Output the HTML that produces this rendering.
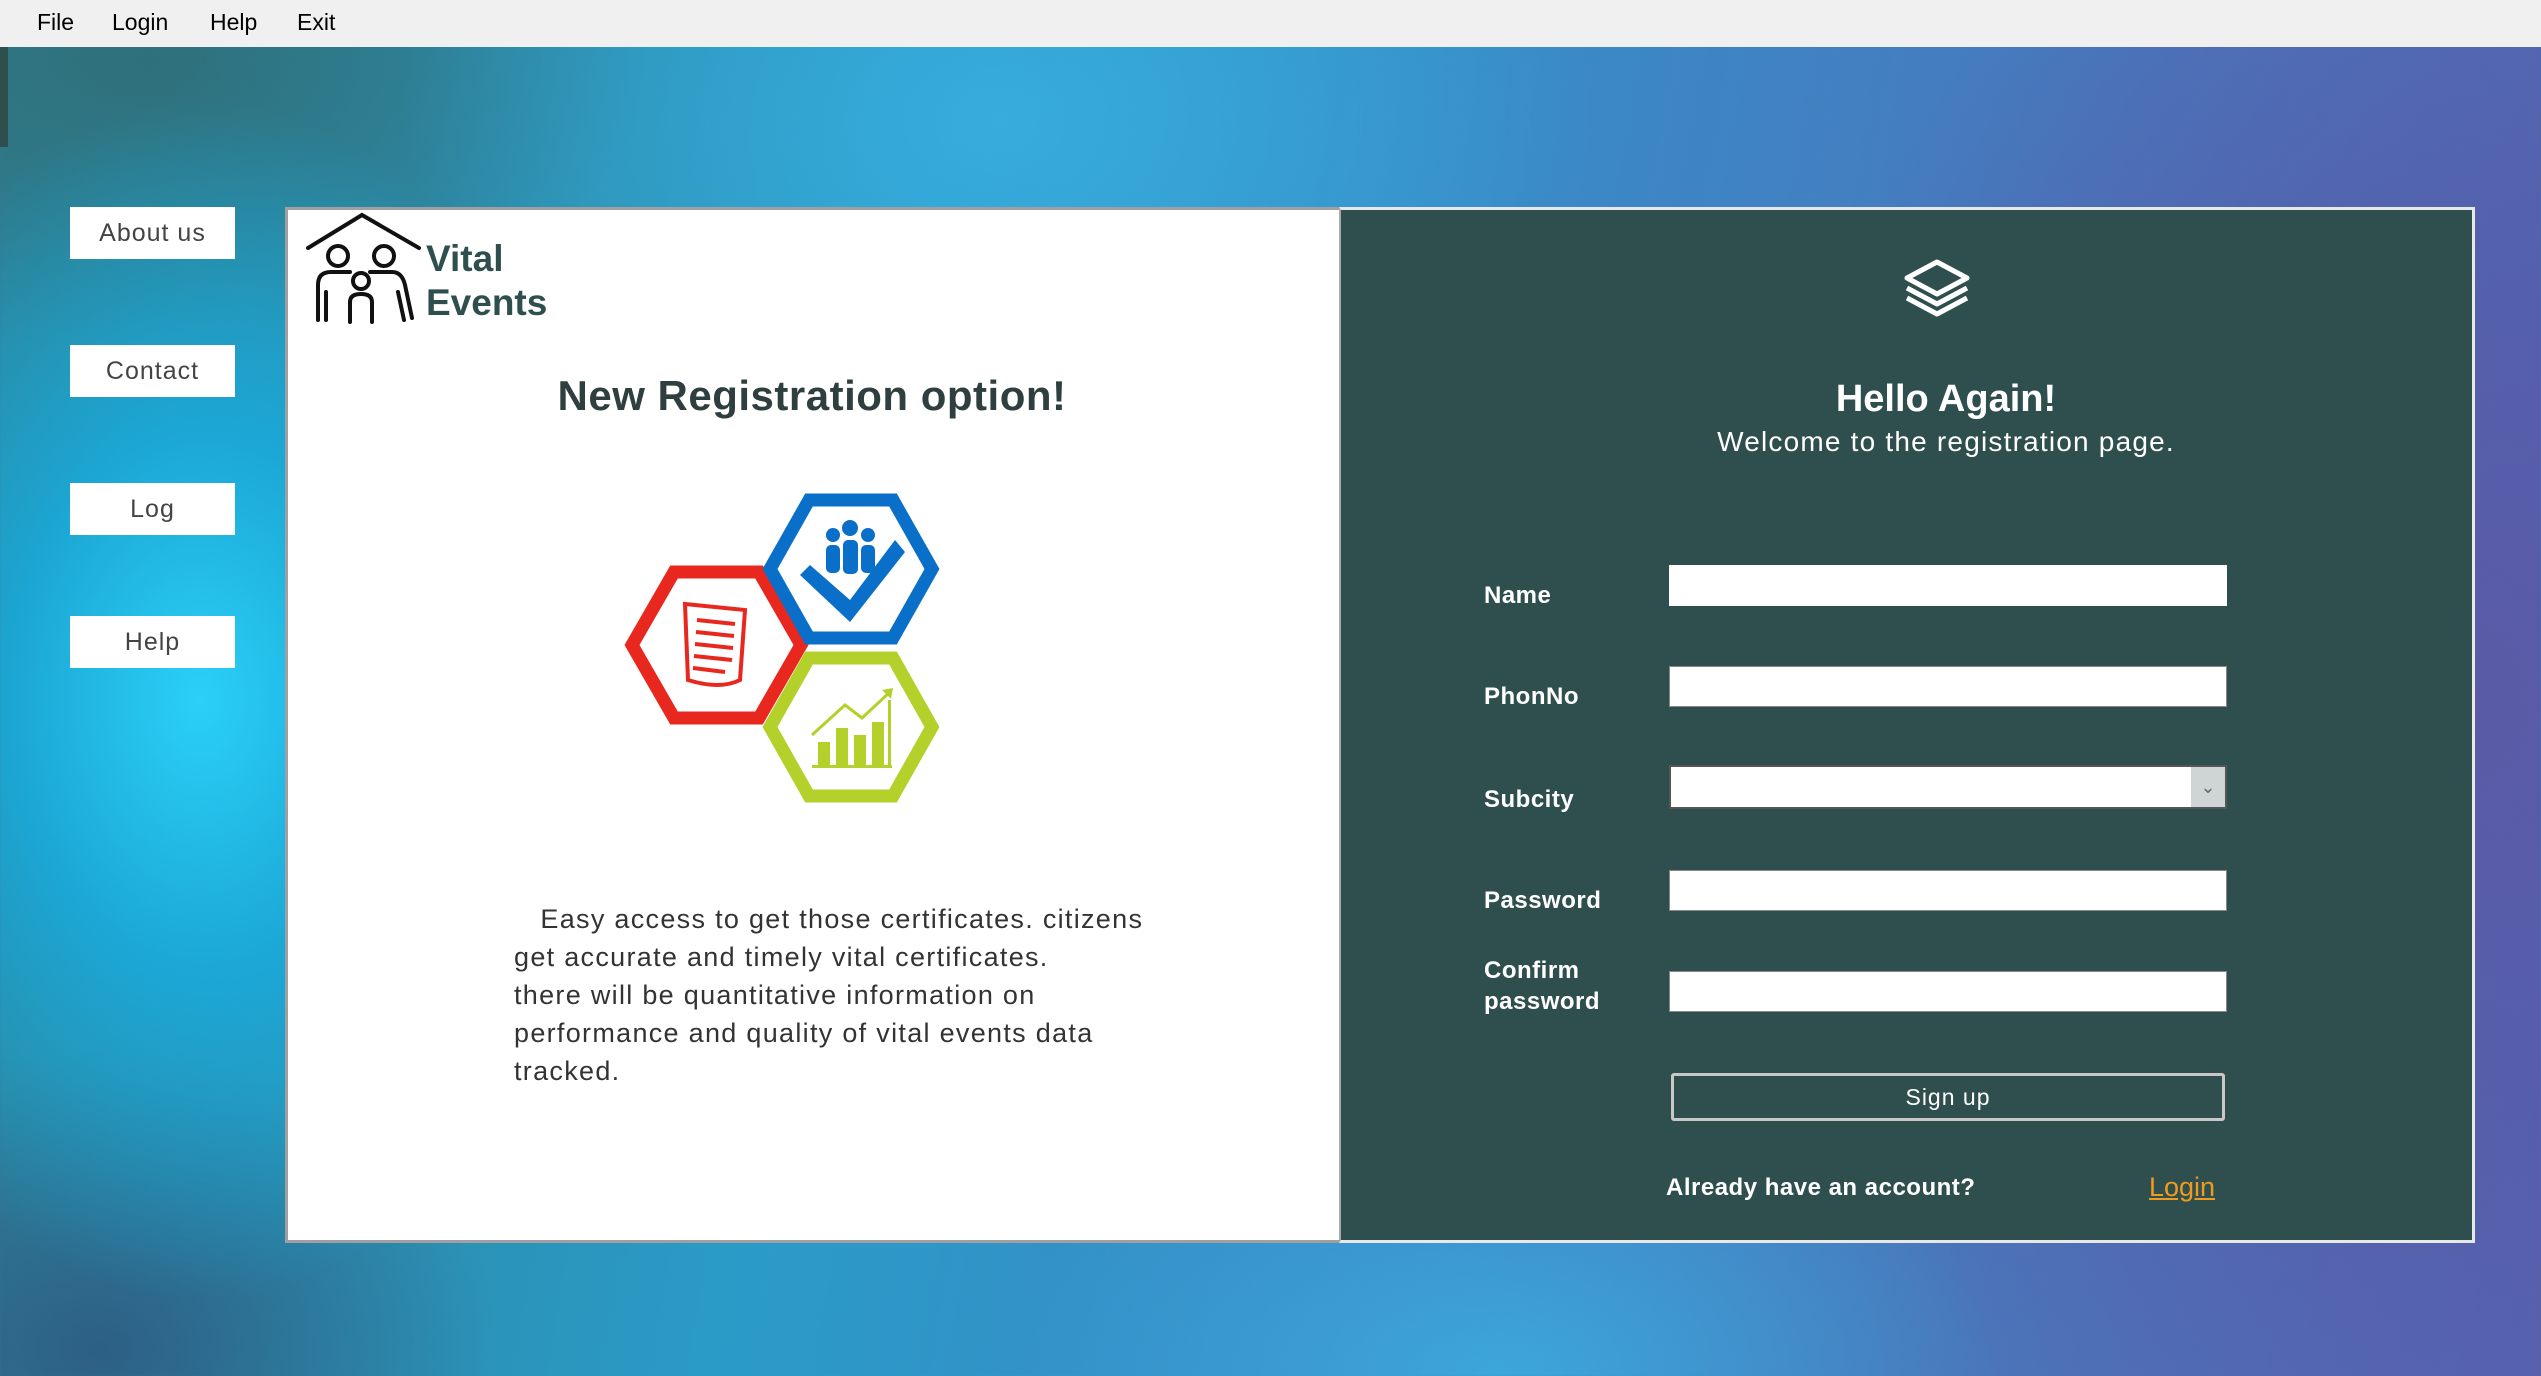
<!DOCTYPE html>
<html><head><meta charset="utf-8"><style>
*{margin:0;padding:0;box-sizing:border-box}
body{width:2541px;height:1376px;overflow:hidden;position:relative;font-family:"Liberation Sans",sans-serif;
background:
radial-gradient(ellipse 420px 600px at 200px 700px,#2ad0f8 0%,rgba(20,180,235,.7) 45%,rgba(20,160,220,0) 100%),
radial-gradient(ellipse 600px 400px at 1000px 120px,rgba(60,180,230,.7),rgba(60,170,220,0) 100%),
radial-gradient(ellipse 700px 900px at 2450px 700px,#5a5aa6 0%,rgba(85,90,170,.6) 50%,rgba(85,90,170,0) 100%),
radial-gradient(ellipse 500px 300px at 1500px 1376px,rgba(60,170,220,.9),rgba(60,170,220,0)),
radial-gradient(ellipse 400px 300px at 100px 1350px,rgba(45,85,125,.8),rgba(40,80,120,0)),
radial-gradient(ellipse 500px 300px at 150px 60px,rgba(47,110,120,.9),rgba(47,110,120,0)),
linear-gradient(100deg,#2f7f90 0%,#2a9bc8 35%,#3d86c6 60%,#5864ae 100%);}
.menu{position:absolute;left:0;top:0;width:2541px;height:47px;background:#f0f0f0;font-size:23px;color:#000}
.menu span{position:absolute;top:9px}
.side{position:absolute;left:70px;width:165px;height:52px;background:#fff;color:#444;font-size:25px;text-align:center;line-height:52px;letter-spacing:1px}
.lp{position:absolute;left:285px;top:207px;width:1054px;height:1036px;background:#fff;border:3px solid #a0a0a0;border-right:none}
.rp{position:absolute;left:1339px;top:207px;width:1136px;height:1036px;background:#2f4f4f;border:3px solid #e8e8e8;border-left:2px solid #aaa}
.t{position:absolute;white-space:nowrap}
.lab{position:absolute;left:1484px;color:#fff;font-weight:bold;font-size:24px;letter-spacing:.5px}
.inp{position:absolute;left:1669px;width:558px;height:41px;background:#fff;border:1px solid #888}
</style></head><body>
<div style="position:absolute;left:0;top:47px;width:8px;height:100px;background:#2f4f4f"></div>
<div class="menu"><span style="left:37px">File</span><span style="left:112px">Login</span><span style="left:210px">Help</span><span style="left:297px">Exit</span></div>
<div class="side" style="top:207px">About us</div>
<div class="side" style="top:345px">Contact</div>
<div class="side" style="top:483px">Log</div>
<div class="side" style="top:616px">Help</div>
<div class="lp"></div>
<div class="rp"></div>
<svg style="position:absolute;left:0;top:0" width="2541" height="1376">
<g fill="none" stroke="#111" stroke-width="4" stroke-linecap="round">
<path d="M308 248 L362 215 L419 248"/>
<circle cx="338" cy="256" r="10"/><circle cx="384" cy="256" r="10"/><circle cx="361" cy="281" r="8"/>
<path d="M318 320 V285 Q318 272 331 272 H350"/><path d="M326 320 V292"/>
<path d="M370 272 H392 Q402 272 405 285 L412 318"/><path d="M398 292 L404 320"/>
<path d="M350 322 V302 Q350 294 361 294 Q372 294 372 302 V322"/>
</g>
<g fill="none" stroke-width="13" stroke-linejoin="miter">
<polygon points="632,645 674,572 759,572 801,645 759,718 674,718" stroke="#e8281e"/>
<polygon points="770,569 809,500 893,500 932,569 893,638 809,638" stroke="#0a6fc8"/>
<polygon points="770,727 809,658 893,658 932,727 893,796 809,796" stroke="#b3d12a"/>
</g>
<g fill="none" stroke="#e8281e" stroke-width="4"><path d="M685 604 L745 610 L740 680 Q720 690 688 680 Z"/>
<path d="M697 620 L735 624 M696 632 L734 636 M695 644 L733 648 M694 656 L732 660 M693 668 L725 672"/></g>
<path d="M810 565 L850 600 L895 540 L905 552 L850 622 L800 575 Z" fill="#0a6fc8"/>
<g fill="#0a6fc8"><circle cx="833" cy="535" r="7"/><circle cx="850" cy="528" r="8"/><circle cx="868" cy="535" r="7"/>
<rect x="826" y="545" width="14" height="28" rx="5"/><rect x="843" y="540" width="15" height="34" rx="5"/><rect x="861" y="545" width="14" height="28" rx="5"/></g>
<g fill="#b3d12a"><rect x="818" y="742" width="12" height="24"/><rect x="836" y="728" width="12" height="38"/><rect x="854" y="735" width="12" height="31"/><rect x="872" y="722" width="12" height="44"/>
<rect x="812" y="765" width="80" height="3"/><rect x="888" y="700" width="3" height="68"/></g>
<path d="M812 735 L845 705 L862 718 L890 692" stroke="#b3d12a" stroke-width="3" fill="none"/><path d="M882 690 L893 688 L891 699Z" fill="#b3d12a"/>
<g fill="none" stroke="#fff" stroke-width="5" stroke-linejoin="round"><path d="M1937 262 L1967 278 L1937 294 L1907 278 Z"/>
<path d="M1907 288 L1937 304 L1967 288"/><path d="M1907 298 L1937 314 L1967 298"/></g>
<rect x="1670" y="603" width="557" height="3" fill="#0a6fc8"/>
<rect x="1674" y="573" width="2" height="28" fill="#000"/>
</svg>
<div class="t" style="left:426px;top:237px;font-size:37px;color:#2f4f4f;line-height:44px;font-weight:bold">Vital<br>Events</div>
<div class="t" style="left:285px;width:1054px;text-align:center;top:372px;font-size:42px;font-weight:bold;color:#2f3f3f;letter-spacing:.5px">New Registration option!</div>
<div class="t" style="left:514px;top:900px;font-size:27px;line-height:38px;color:#333;letter-spacing:1.3px">&nbsp;&nbsp;&nbsp;Easy access to get those certificates. citizens<br>get accurate and timely vital certificates.<br>there will be quantitative information on<br>performance and quality of vital events data<br>tracked.</div>
<div class="t" style="left:1339px;width:1214px;text-align:center;top:378px;font-size:38px;font-weight:bold;color:#fff">Hello Again!</div>
<div class="t" style="left:1339px;width:1214px;text-align:center;top:426px;font-size:28px;color:#fff;letter-spacing:1.2px">Welcome to the registration page.</div>
<div class="lab" style="top:582px">Name</div>
<div class="lab" style="top:683px">PhonNo</div>
<div class="lab" style="top:786px">Subcity</div>
<div class="lab" style="top:887px">Password</div>
<div class="lab" style="top:955px;line-height:31px">Confirm<br>password</div>
<div class="inp" style="top:565px;border:none"></div>
<div class="inp" style="top:666px"></div>
<div class="inp" style="top:765px;height:44px;background:#fff;border:2px solid #555"><div style="position:absolute;right:0;top:0;width:34px;height:40px;background:#cfd4d4;color:#666;font-size:18px;text-align:center;line-height:40px">&#8964;</div></div>
<div class="inp" style="top:870px"></div>
<div class="inp" style="top:971px"></div>
<div class="t" style="left:1671px;top:1073px;width:554px;height:48px;border:3px solid #c8c8c8;border-radius:3px;color:#fff;font-size:23px;text-align:center;line-height:42px;letter-spacing:1px">Sign up</div>
<div class="t" style="left:1666px;top:1174px;font-size:24px;font-weight:bold;color:#fff;letter-spacing:.5px">Already have an account?</div>
<div class="t" style="left:2149px;top:1172px;font-size:27px;color:#f09a1e;text-decoration:underline">Login</div>
</body></html>
